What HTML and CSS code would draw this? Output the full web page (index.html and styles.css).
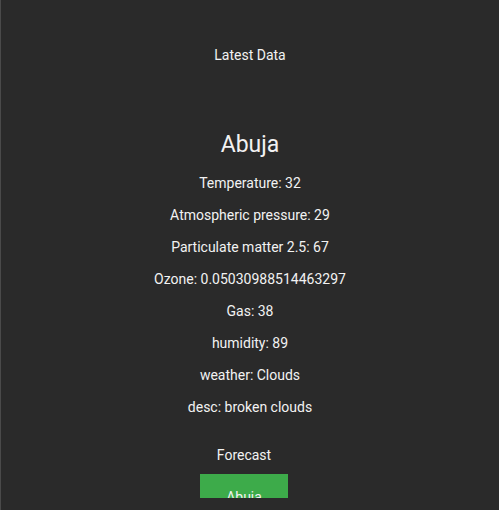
FILE: index.html
```html
<!DOCTYPE html>
<html lang="en">
<head>
    <meta charset="UTF-8">
    <meta name="viewport" content="width=device-width, initial-scale=1.0">
    <title>Weather Data</title>
    <link rel="stylesheet" href="styles.css">
</head>
<body>
    <div class="page">
        <p class="heading">Latest Data</p>
        <div class="latest">
            <h2 class="city">Abuja</h2>
            <p>Temperature: 32</p>
            <p>Atmospheric pressure: 29</p>
            <p>Particulate matter 2.5: 67</p>
            <p>Ozone: 0.05030988514463297</p>
            <p>Gas: 38</p>
            <p>humidity: 89</p>
            <p>weather: Clouds</p>
            <p>desc: broken clouds</p>
        </div>
        <div class="forecast">
            <p>Forecast</p>
            <button type="button">Abuja</button>
        </div>
    </div>
</body>
</html>
```

FILE: styles.css
```css
*{
    margin:0;
    padding:0;
    box-sizing:border-box;
}
body{
    background:#2a2a2a;
    color:#f2f2f2;
    font-family:Roboto, "Liberation Sans", sans-serif;
    font-size:14px;
    border-left:1px solid #4a4a4a;
    min-height:100vh;
}
.page{
    height:498px;
    overflow:hidden;
    display:flex;
    flex-direction:column;
    align-items:center;
    text-align:center;
}
.heading{
    margin-top:46px;
    line-height:18px;
}
.city{
    margin-top:68px;
    font-size:23px;
    font-weight:400;
    line-height:26px;
    margin-bottom:16px;
}
.latest p{
    line-height:18px;
    margin-bottom:14px;
}
.forecast{
    margin-top:16px;
    margin-right:12px;
    display:flex;
    flex-direction:column;
    align-items:center;
}
.forecast p{
    line-height:18px;
}
.forecast button{
    margin-top:10px;
    width:88px;
    padding:14px 0;
    background:#3dab4a;
    color:#f2f2f2;
    border:none;
    font-family:inherit;
    font-size:14px;
    line-height:18px;
}
```
